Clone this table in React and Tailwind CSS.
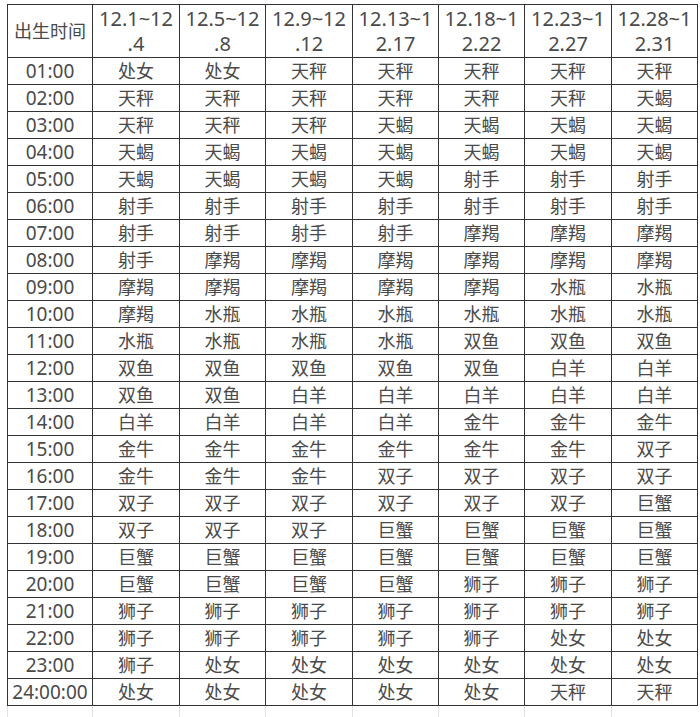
const heads = [
  ["12.1~12", ".4"],
  ["12.5~12", ".8"],
  ["12.9~12", ".12"],
  ["12.13~1", "2.17"],
  ["12.18~1", "2.22"],
  ["12.23~1", "2.27"],
  ["12.28~1", "2.31"],
];

const widths = [85, 87, 86, 87, 86, 86, 87, 86];

const rows = [
  ["01:00", "处女 处女 天秤 天秤 天秤 天秤 天秤"],
  ["02:00", "天秤 天秤 天秤 天秤 天秤 天秤 天蝎"],
  ["03:00", "天秤 天秤 天秤 天蝎 天蝎 天蝎 天蝎"],
  ["04:00", "天蝎 天蝎 天蝎 天蝎 天蝎 天蝎 天蝎"],
  ["05:00", "天蝎 天蝎 天蝎 天蝎 射手 射手 射手"],
  ["06:00", "射手 射手 射手 射手 射手 射手 射手"],
  ["07:00", "射手 射手 射手 射手 摩羯 摩羯 摩羯"],
  ["08:00", "射手 摩羯 摩羯 摩羯 摩羯 摩羯 摩羯"],
  ["09:00", "摩羯 摩羯 摩羯 摩羯 摩羯 水瓶 水瓶"],
  ["10:00", "摩羯 水瓶 水瓶 水瓶 水瓶 水瓶 水瓶"],
  ["11:00", "水瓶 水瓶 水瓶 水瓶 双鱼 双鱼 双鱼"],
  ["12:00", "双鱼 双鱼 双鱼 双鱼 双鱼 白羊 白羊"],
  ["13:00", "双鱼 双鱼 白羊 白羊 白羊 白羊 白羊"],
  ["14:00", "白羊 白羊 白羊 白羊 金牛 金牛 金牛"],
  ["15:00", "金牛 金牛 金牛 金牛 金牛 金牛 双子"],
  ["16:00", "金牛 金牛 金牛 双子 双子 双子 双子"],
  ["17:00", "双子 双子 双子 双子 双子 双子 巨蟹"],
  ["18:00", "双子 双子 双子 巨蟹 巨蟹 巨蟹 巨蟹"],
  ["19:00", "巨蟹 巨蟹 巨蟹 巨蟹 巨蟹 巨蟹 巨蟹"],
  ["20:00", "巨蟹 巨蟹 巨蟹 巨蟹 狮子 狮子 狮子"],
  ["21:00", "狮子 狮子 狮子 狮子 狮子 狮子 狮子"],
  ["22:00", "狮子 狮子 狮子 狮子 狮子 处女 处女"],
  ["23:00", "狮子 处女 处女 处女 处女 处女 处女"],
  ["24:00:00", "处女 处女 处女 处女 处女 天秤 天秤"],
];

export default function App() {
  return (
    <div className="h-[717px] w-[700px] overflow-hidden bg-white pl-[7px] pt-[4px] font-['Noto_Sans','Noto_Sans_CJK_SC',sans-serif] text-[#4a4a4a]">
      <table className="table-fixed border-collapse">
        <colgroup>
          {widths.map((w, i) => (
            <col key={i} style={{ width: w }} />
          ))}
        </colgroup>
        <thead>
          <tr className="h-[53px]">
            <th className="border border-[#333] p-0 text-center text-[18px] font-normal">
              出生时间
            </th>
            {heads.map(([a, b]) => (
              <th
                key={a}
                className="border border-[#333] p-0 text-center text-[20px] font-normal leading-[25px]"
              >
                <div>{a}</div>
                <div>{b}</div>
              </th>
            ))}
          </tr>
        </thead>
        <tbody>
          {rows.map(([t, signs]) => (
            <tr key={t} className="h-[27px]">
              <td className="border border-[#333] p-0 text-center text-[19px] leading-[26px] whitespace-nowrap">
                {t}
              </td>
              {signs.split(" ").map((s, i) => (
                <td
                  key={i}
                  className="border border-[#333] p-0 text-center text-[18px] leading-[26px]"
                >
                  {s}
                </td>
              ))}
            </tr>
          ))}
        </tbody>
      </table>
      {/* faint sheet grid below the table */}
      <div className="flex h-[12px]">
        {widths.map((w, i) => (
          <div key={i} className="h-full border-l border-[#e2e2e2]" style={{ width: w }} />
        ))}
      </div>
    </div>
  );
}
